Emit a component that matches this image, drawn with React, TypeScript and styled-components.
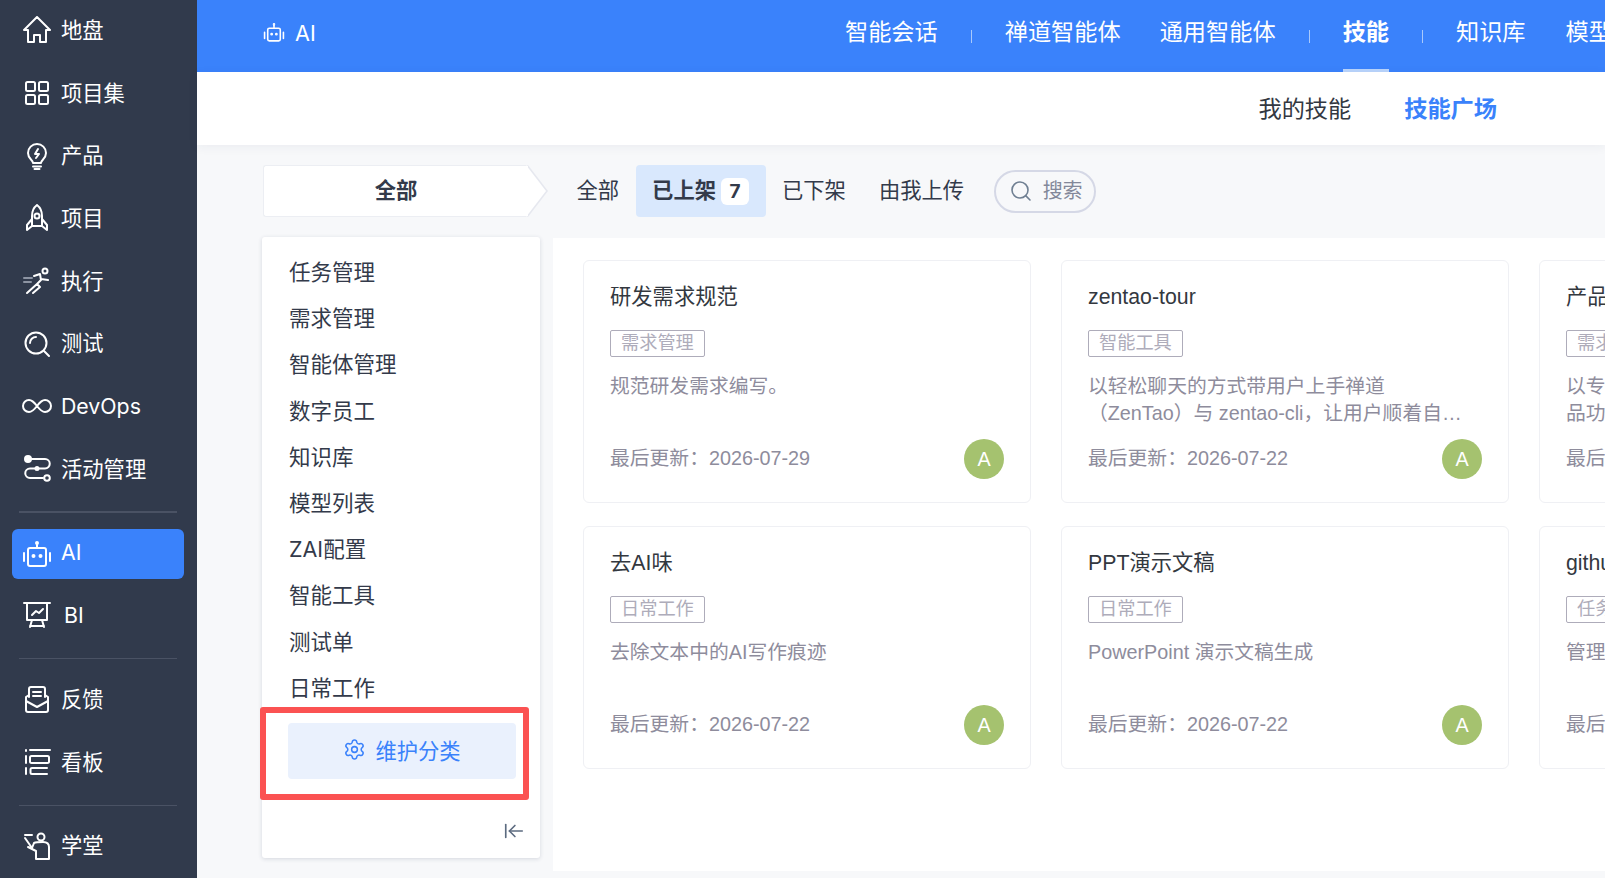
import React from "react";
import styled, { createGlobalStyle } from "styled-components";
import { Settings, Search, ArrowLeftToLine } from "lucide-react";

const GlobalStyle = createGlobalStyle`
  html, body {
    margin: 0;
    padding: 0;
    height: 100%;
    background: #f7f8fa;
  }
  body {
    font-family: Inter, "Noto Sans CJK SC", sans-serif;
    overflow: hidden;
  }
  * { box-sizing: border-box; }
`;

const Page = styled.div`
  display: flex;
  width: 1605px;
  height: 878px;
  overflow: hidden;
`;

const Sidebar = styled.aside`
  flex: 0 0 197px;
  background: #313a4c;
  padding: 0 13px 0 12px;
`;

const SideGroup = styled.div`
  margin-top: ${({ $top }: { $top: number }) => $top}px;
`;

const SideItem = styled.div<{ $active?: boolean }>`
  display: flex;
  align-items: center;
  height: ${({ $active }) => ($active ? 50 : 62.7)}px;
  margin-bottom: ${({ $active }) => ($active ? 5 : 0)}px;
  padding-left: 9px;
  border-radius: 6px;
  color: #fff;
  font-size: 21.3px;
  font-weight: 400;
  background: ${({ $active }) => ($active ? "#3a82fb" : "transparent")};

  svg {
    flex: 0 0 32px;
    margin-right: 8px;
    fill: none;
    stroke: #fff;
    stroke-width: 2;
    stroke-linecap: round;
    stroke-linejoin: round;
  }
`;

const SideLabel = styled.span<{ $indent?: number; $lift?: number }>`
  padding-bottom: ${({ $lift }) => $lift ?? 4}px;
  margin-left: ${({ $indent }) => $indent ?? 0}px;
`;

const SideDivider = styled.div<{ $thick?: boolean }>`
  height: ${({ $thick }) => ($thick ? 2 : 1)}px;
  margin: 0 7px;
  background: #4a5264;
`;

const Main = styled.main`
  flex: 1;
  min-width: 0;
  display: flex;
  flex-direction: column;
`;

const TopBar = styled.header`
  flex: 0 0 72px;
  display: flex;
  align-items: center;
  padding-left: 66px;
  background: #3a82fb;
  color: #fff;
  overflow: hidden;
`;

const AppTitle = styled.div`
  flex: none;
  display: flex;
  align-items: center;
  gap: 10px;
  width: 104px;
  margin: 0 478px 7px 0;
  font-size: 21.6px;
  font-weight: 400;

  svg {
    fill: none;
    stroke: #fff;
    stroke-width: 2;
    stroke-linecap: round;
    stroke-linejoin: round;
  }
`;

const NavItem = styled.div<{ $active?: boolean }>`
  position: relative;
  flex: none;
  height: 72px;
  line-height: 64px;
  font-size: 23.2px;
  font-weight: ${({ $active }) => ($active ? 700 : 400)};
  white-space: nowrap;

  ${({ $active }) =>
    $active &&
    `&::after {
      content: "";
      position: absolute;
      left: 0;
      right: 0;
      bottom: 0;
      height: 3px;
      background: #b9d4fb;
    }`}
`;

const NavGap = styled.div`
  flex: none;
  width: ${({ $width }: { $width: number }) => $width}px;
`;

const NavSep = styled.div`
  flex: none;
  width: 1px;
  height: 13px;
  margin: 0 33px;
  background: #a9c9fb;
`;

const SubBar = styled.div`
  flex: 0 0 73px;
  display: flex;
  align-items: center;
  justify-content: flex-end;
  gap: 53px;
  padding: 0 108px 4px 0;
  background: #fff;
  box-shadow: 0 2px 10px rgba(40, 50, 80, 0.06);
  position: relative;
`;

const SubLink = styled.div<{ $active?: boolean }>`
  font-size: 23.2px;
  font-weight: ${({ $active }) => ($active ? 700 : 400)};
  color: ${({ $active }) => ($active ? "#3a82fb" : "#333842")};
`;

const Body = styled.div`
  flex: 1;
  min-height: 0;
  padding: 20px 0 7px 65px;
  display: flex;
  flex-direction: column;
`;

const Toolbar = styled.div`
  flex: 0 0 52px;
  display: flex;
  align-items: center;
  margin-bottom: 21px;
`;

const CrumbBox = styled.div`
  position: relative;
  width: 265px;
  height: 52px;
  margin: 0 32px 0 1px;
  padding-bottom: 5px;
  display: flex;
  align-items: center;
  justify-content: center;
  background: #fff;
  border: 1px solid #eceef3;
  border-right: 0;
  border-radius: 3px 0 0 3px;
  font-size: 21.3px;
  font-weight: 700;
  color: #333a4a;

  &::before,
  &::after {
    content: "";
    position: absolute;
    top: -1px;
    bottom: -1px;
    width: 20px;
    clip-path: polygon(0 0, 100% 50%, 0 100%);
  }
  &::before {
    left: 100%;
    background: #e6e8ef;
  }
  &::after {
    left: calc(100% - 2px);
    background: #fff;
  }
`;

const Tab = styled.div<{ $active?: boolean }>`
  display: flex;
  align-items: center;
  height: 52px;
  padding: 0 16.5px 5px;
  border-radius: 4px;
  font-size: 21.3px;
  font-weight: ${({ $active }) => ($active ? 700 : 400)};
  color: #333a4a;
  background: ${({ $active }) => ($active ? "#d9e8fd" : "transparent")};
`;

const Badge = styled.span`
  display: flex;
  align-items: center;
  justify-content: center;
  width: 28px;
  height: 27px;
  margin: 5px 0 0 5px;
  border-radius: 6px;
  background: #fff;
  font-size: 19px;
  font-weight: 700;
`;

const SearchBox = styled.div`
  display: flex;
  align-items: center;
  gap: 10px;
  width: 102px;
  height: 43px;
  margin-left: 13px;
  padding: 0 0 3px 13px;
  border: 2px solid #d5d8e6;
  border-radius: 22px;
  color: #83889a;
  font-size: 20px;
  font-weight: 400;

  svg {
    flex: none;
    margin-top: 3px;
    color: #6f7f92;
  }
`;

const Columns = styled.div`
  flex: 1;
  min-height: 0;
  display: flex;
`;

const CategoryPanel = styled.div`
  position: relative;
  flex: 0 0 278px;
  margin: -1px 13px 13px 0;
  padding: 12px 0 0 27px;
  background: #fff;
  border-radius: 3px;
  box-shadow: 0 1px 4px rgba(40, 50, 80, 0.16);
`;

const CategoryItem = styled.div`
  height: 46.2px;
  line-height: 46px;
  font-size: 21.5px;
  font-weight: 400;
  color: #333a4a;
`;

const MaintainButton = styled.div`
  display: flex;
  align-items: center;
  justify-content: center;
  gap: 9px;
  width: 228px;
  height: 56px;
  margin: 12px 0 0 -1px;
  padding-bottom: 2px;
  border-radius: 4px;
  background: #eaf1fd;
  color: #3a82fb;
  font-size: 21.3px;
  font-weight: 400;
`;

const Highlight = styled.div`
  position: absolute;
  left: -2px;
  top: 470px;
  width: 269px;
  height: 93px;
  border: 6px solid #fb5252;
  border-radius: 3px;
`;

const CollapseIcon = styled.div`
  position: absolute;
  right: 15px;
  bottom: 16px;
  display: flex;
  color: #5c6b80;
`;

const Content = styled.div`
  flex: 1;
  min-width: 0;
  overflow: hidden;
  background: #fff;
  padding: 22px 0 0 30px;
`;

const CardGrid = styled.div`
  display: grid;
  grid-template-columns: repeat(3, 448px);
  grid-auto-rows: 243px;
  column-gap: 30px;
  row-gap: 23px;
  font-family: "Liberation Sans", "Noto Sans CJK SC", sans-serif;
`;

const Card = styled.article`
  display: flex;
  flex-direction: column;
  padding: 23px 26px;
  border: 1px solid #eff0f4;
  border-radius: 6px;
  background: #fff;
`;

const CardTitle = styled.div`
  height: 26px;
  line-height: 26px;
  font-size: 21.3px;
  font-weight: 400;
  color: #33383f;
  white-space: nowrap;
`;

const Tag = styled.span`
  align-self: flex-start;
  height: 27px;
  line-height: 24px;
  margin-top: 20px;
  padding: 0 10px;
  border: 1px solid #aeacba;
  border-radius: 2px;
  font-size: 18.2px;
  font-weight: 400;
  color: #aeacba;
  white-space: nowrap;
`;

const CardDesc = styled.div`
  max-width: 382px;
  margin-top: 16px;
  font-size: 19.8px;
  font-weight: 400;
  line-height: 27px;
  color: #8e8c9c;
  display: -webkit-box;
  -webkit-line-clamp: 2;
  -webkit-box-orient: vertical;
  overflow: hidden;
`;

const CardFooter = styled.div`
  margin-top: auto;
  display: flex;
  align-items: center;
  justify-content: space-between;
  font-size: 19.8px;
  font-weight: 400;
  color: #8e8c9c;
`;

const UpdatedAt = styled.span`
  padding-bottom: 5px;
`;

const Avatar = styled.div`
  flex: none;
  width: 40px;
  height: 40px;
  border-radius: 50%;
  display: flex;
  align-items: center;
  justify-content: center;
  background: #a5c26f;
  color: #fff;
  font-size: 19.8px;
`;

const BotIcon = ({ size }: { size: number }) => (
  <svg width={size} height={size} viewBox="0 0 28 28">
    <path d="M14 4v3" />
    <circle cx="14" cy="3" r="0.6" />
    <rect x="6" y="8" width="16" height="16" rx="2" />
    <path d="M2 13v8M26 13v8" />
    <circle cx="11" cy="15.5" r="0.8" />
    <circle cx="17" cy="15.5" r="0.8" />
  </svg>
);

// one drawing per menu entry, all on a 28 box
const icons: Record<string, React.ReactNode> = {
  home: <path d="M1 14 14 1l13 13h-4v12h-6v-7h-6v7H5V14z" />,
  grid: (
    <>
      <rect x="3" y="3" width="9" height="9" rx="1.5" />
      <rect x="16" y="3" width="9" height="9" rx="1.5" />
      <rect x="3" y="16" width="9" height="9" rx="1.5" />
      <rect x="16" y="16" width="9" height="9" rx="1.5" />
    </>
  ),
  bulb: (
    <>
      <path d="M10 21c0-3-5-4-5-10a9 9 0 0 1 18 0c0 6-5 7-5 10z" />
      <path d="M15 7l-3 5h4l-3 4" />
      <path d="M10 24.500h8M11.500 27h5" />
    </>
  ),
  rocket: (
    <>
      <path d="M14 1c4 3 5 7 5 11v10H9V12c0-4 1-8 5-11z" />
      <circle cx="14" cy="12" r="2.500" />
      <path d="M9 15l-5 6v5l5-4M19 15l5 6v5l-5-4" />
    </>
  ),
  runner: (
    <>
      <circle cx="22" cy="4" r="2.500" />
      <path d="M11 9l6-2 1 6-4 4 3 3-7 6M14 17l-10 9M18 12l7 1" />
      <path d="M1 11h8M1 15h7" stroke="#8d94a3" />
    </>
  ),
  search: (
    <>
      <circle cx="13" cy="13" r="10.500" />
      <path d="M7 13a6 6 0 0 1 6-6M21 21l5 5" />
    </>
  ),
  infinity: (
    <path d="M14 14c-3-4-5-6-8-6a6 6 0 0 0 0 12c3 0 5-2 8-6s5-6 8-6a6 6 0 0 1 0 12c-3 0-5-2-8-6z" />
  ),
  flow: (
    <>
      <circle cx="5" cy="4" r="3" fill="#fff" />
      <path d="M8 4h14a4 4 0 0 1 0 9.500H7a4.500 4.500 0 0 0 0 9.500h13" />
      <circle cx="14" cy="13.500" r="1.500" fill="#fff" />
      <circle cx="24" cy="23" r="2.800" />
    </>
  ),
  bot: (
    <>
      <path d="M14 5v3" />
      <circle cx="14" cy="3" r="1" fill="#fff" />
      <rect x="5" y="8" width="18" height="18" rx="2" />
      <path d="M1 13v8M27 13v8" />
      <circle cx="10.500" cy="16" r="1" fill="#fff" />
      <circle cx="17.500" cy="16" r="1" fill="#fff" />
    </>
  ),
  chart: (
    <>
      <path d="M1 2h26M4 2v17h20V2M9 19l-2 7M19 19l2 7M7 25h14" />
      <path d="M9 14l4-4 3 2 4-4" />
    </>
  ),
  mail: (
    <>
      <path d="M6 11V3a2 2 0 0 1 2-2h12a2 2 0 0 1 2 2v8" />
      <path d="M3 11v13a2 2 0 0 0 2 2h18a2 2 0 0 0 2-2V11l-3-2M6 9l-3 2" />
      <path d="M3 15l11 6 11-6M10 6h8M10 10h8" />
    </>
  ),
  kanban: (
    <>
      <path d="M7 2h20M3 2v1M3 8v7M3 20v6" />
      <rect x="7" y="8" width="19" height="7" rx="1.500" />
      <path d="M24 20H9a1.500 1.500 0 0 0-1.500 1.500v3A1.500 1.500 0 0 0 9 26h15" />
    </>
  ),
  teacher: (
    <>
      <circle cx="18" cy="5" r="3.500" />
      <path d="M2 3h7M2 6l7 10 2-5c2-1 5-1 9-1s6 2 6 5v12H13V19l-4-2-4-2" />
    </>
  ),
};

const MenuIcon = ({ name }: { name: string }) => (
  <svg width="32" height="28" viewBox="-2 0 32 28">
    {icons[name]}
  </svg>
);

const categories = ["任务管理", "需求管理", "智能体管理", "数字员工", "知识库", "模型列表", "ZAI配置", "智能工具", "测试单", "日常工作"];

const skills = [
  { title: "研发需求规范", tag: "需求管理", desc: "规范研发需求编写。", date: "2026-07-29" },
  { title: "zentao-tour", tag: "智能工具", desc: "以轻松聊天的方式带用户上手禅道（ZenTao）与 zentao-cli，让用户顺着自然的对话完成操作", date: "2026-07-22" },
  { title: "产品需求文档", tag: "需求管理", desc: "以专业的产品经理的视角，帮助用户梳理产品功能", date: "2026-07-22" },
  { title: "去AI味", tag: "日常工作", desc: "去除文本中的AI写作痕迹", date: "2026-07-22" },
  { title: "PPT演示文稿", tag: "日常工作", desc: "PowerPoint 演示文稿生成", date: "2026-07-22" },
  { title: "github-issues", tag: "任务管理", desc: "管理 GitHub 上的任务", date: "2026-07-22" },
];

export default function App() {
  return (
    <Page>
      <GlobalStyle />
      <Sidebar>
        <SideGroup $top={-1}>
          <SideItem><MenuIcon name="home" /><SideLabel>地盘</SideLabel></SideItem>
          <SideItem><MenuIcon name="grid" /><SideLabel>项目集</SideLabel></SideItem>
          <SideItem><MenuIcon name="bulb" /><SideLabel>产品</SideLabel></SideItem>
          <SideItem><MenuIcon name="rocket" /><SideLabel>项目</SideLabel></SideItem>
          <SideItem><MenuIcon name="runner" /><SideLabel>执行</SideLabel></SideItem>
          <SideItem><MenuIcon name="search" /><SideLabel>测试</SideLabel></SideItem>
          <SideItem><MenuIcon name="infinity" />DevOps</SideItem>
          <SideItem><MenuIcon name="flow" /><SideLabel>活动管理</SideLabel></SideItem>
        </SideGroup>
        <SideGroup $top={10}><SideDivider $thick /></SideGroup>
        <SideGroup $top={16}>
          <SideItem $active><MenuIcon name="bot" /><SideLabel>AI</SideLabel></SideItem>
          <SideItem><MenuIcon name="chart" /><SideLabel $indent={3} $lift={0}>BI</SideLabel></SideItem>
        </SideGroup>
        <SideGroup $top={12}><SideDivider /></SideGroup>
        <SideGroup $top={9}>
          <SideItem><MenuIcon name="mail" /><SideLabel>反馈</SideLabel></SideItem>
          <SideItem><MenuIcon name="kanban" /><SideLabel>看板</SideLabel></SideItem>
        </SideGroup>
        <SideGroup $top={11}><SideDivider /></SideGroup>
        <SideGroup $top={9}>
          <SideItem><MenuIcon name="teacher" /><SideLabel>学堂</SideLabel></SideItem>
        </SideGroup>
      </Sidebar>
      <Main>
        <TopBar>
          <AppTitle><BotIcon size={22} />AI</AppTitle>
          <NavItem>智能会话</NavItem>
          <NavSep />
          <NavItem>禅道智能体</NavItem>
          <NavGap $width={39} />
          <NavItem>通用智能体</NavItem>
          <NavSep />
          <NavItem $active>技能</NavItem>
          <NavSep />
          <NavItem>知识库</NavItem>
          <NavGap $width={40} />
          <NavItem>模型列表</NavItem>
        </TopBar>
        <SubBar>
          <SubLink>我的技能</SubLink>
          <SubLink $active>技能广场</SubLink>
        </SubBar>
        <Body>
          <Toolbar>
            <CrumbBox>全部</CrumbBox>
            <Tab>全部</Tab>
            <Tab $active>已上架<Badge>7</Badge></Tab>
            <Tab>已下架</Tab>
            <Tab>由我上传</Tab>
            <SearchBox><Search size={24} strokeWidth={1.6} />搜索</SearchBox>
          </Toolbar>
          <Columns>
            <CategoryPanel>
              {categories.map((name) => (
                <CategoryItem key={name}>{name}</CategoryItem>
              ))}
              <MaintainButton><Settings size={23} strokeWidth={1.6} />维护分类</MaintainButton>
              <Highlight />
              <CollapseIcon><ArrowLeftToLine size={22} strokeWidth={1.8} /></CollapseIcon>
            </CategoryPanel>
            <Content>
              <CardGrid>
                {skills.map((skill) => (
                  <Card key={skill.title}>
                    <CardTitle>{skill.title}</CardTitle>
                    <Tag>{skill.tag}</Tag>
                    <CardDesc>{skill.desc}</CardDesc>
                    <CardFooter>
                      <UpdatedAt>最后更新：{skill.date}</UpdatedAt>
                      <Avatar>A</Avatar>
                    </CardFooter>
                  </Card>
                ))}
              </CardGrid>
            </Content>
          </Columns>
        </Body>
      </Main>
    </Page>
  );
}
